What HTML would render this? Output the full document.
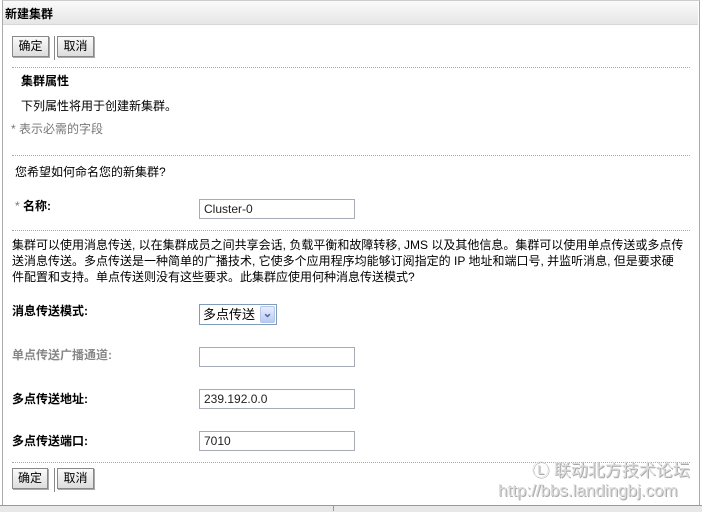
<!DOCTYPE html>
<html><head><meta charset="utf-8"><style>
body{margin:0;width:702px;height:511px;background:#fff;font-family:"Liberation Sans","Noto Sans CJK SC",sans-serif;font-size:12px;color:#000;position:relative;overflow:hidden}
.a{position:absolute;white-space:nowrap}
.frame{position:absolute;left:2px;top:0;width:696px;height:504px;border-left:1px solid #aaa;border-right:1px solid #aaa;border-top:1px solid #ccc}
.hdr{position:absolute;left:3px;top:1px;width:695px;height:23px;background:linear-gradient(#fafafa,#e6e6e6);border-bottom:1px solid #d8d8d8}
.btn{position:absolute;height:19px;border:1px solid #888;background:linear-gradient(#fafafa,#ddd);font-size:12px;line-height:19px;text-align:center;box-shadow:1px 1px 0 #aaa}
.dot{position:absolute;left:12px;width:678px;border-top:1px dotted #aaa}
.inp{position:absolute;left:199px;border:1px solid #a5acb5;font-size:12px;line-height:18px;padding-left:4px;box-sizing:border-box;width:156px;height:20px;color:#222}
b{font-weight:bold}
.g{color:#777}
</style></head><body>
<div class="frame"></div>
<div class="hdr"></div>
<div class="a" style="left:5px;top:5px;font-weight:bold">新建集群</div>
<div class="btn" style="left:12px;top:36px;width:35px">确定</div>
<div class="a" style="left:54px;top:36px;height:24px;border-left:1px solid #888"></div>
<div class="btn" style="left:57px;top:36px;width:35px">取消</div>
<div class="dot" style="top:67px"></div>
<div class="a" style="left:21px;top:72px;font-weight:bold">集群属性</div>
<div class="a" style="left:21px;top:97px">下列属性将用于创建新集群。</div>
<div class="a g" style="left:11px;top:120px">* 表示必需的字段</div>
<div class="dot" style="top:155px"></div>
<div class="a" style="left:15px;top:163px">您希望如何命名您的新集群?</div>
<div class="a" style="left:15px;top:197px"><span class="g">* </span><b>名称:</b></div>
<div class="inp" style="top:199px">Cluster-0</div>
<div class="dot" style="top:230px"></div>
<div class="a" style="left:12px;top:237px;line-height:16px">集群可以使用消息传送, 以在集群成员之间共享会话, 负载平衡和故障转移, JMS 以及其他信息。集群可以使用单点传送或多点传<br>送消息传送。多点传送是一种简单的广播技术, 它使多个应用程序均能够订阅指定的 IP 地址和端口号, 并监听消息, 但是要求硬<br>件配置和支持。单点传送则没有这些要求。此集群应使用何种消息传送模式?</div>
<div class="a" style="left:12px;top:302px;font-weight:bold">消息传送模式:</div>
<div class="a" style="left:199px;top:304px;border:1px solid #7f9db9;font-size:13px;line-height:19px;padding-left:3px;box-sizing:border-box;height:21px;width:78px">多点传送<span style="position:absolute;right:1px;top:1px;width:15px;height:17px;background:linear-gradient(#e6eefc,#b9cbf2);border:1px solid #b4c6ee;box-sizing:border-box;border-radius:2px;color:#4d6aa8;font-size:12px;line-height:13px;text-align:center;font-weight:bold">⌄</span></div>
<div class="a g" style="left:12px;top:346px;font-weight:bold;color:#888">单点传送广播通道:</div>
<div class="inp" style="top:347px"></div>
<div class="a" style="left:12px;top:390px;font-weight:bold">多点传送地址:</div>
<div class="inp" style="top:389px">239.192.0.0</div>
<div class="a" style="left:12px;top:432px;font-weight:bold">多点传送端口:</div>
<div class="inp" style="top:431px">7010</div>
<div class="dot" style="top:462px"></div>
<div class="btn" style="left:12px;top:468px;width:34px">确定</div>
<div class="a" style="left:54px;top:468px;height:24px;border-left:1px solid #888"></div>
<div class="btn" style="left:57px;top:468px;width:35px">取消</div>
<div class="a" style="left:532px;top:456px;font-size:17px;color:#dcdcdc;text-shadow:1px 1px 0 #aaa">Ⓛ 联动北方技术论坛</div>
<div class="a" style="left:498px;top:481px;font-size:17px;color:#dcdcdc;text-shadow:1px 1px 0 #aaa">http://bbs.landingbj.com</div>
<div class="a" style="left:0;top:505px;width:702px;height:6px;background:#e8e8e8;border-top:1px solid #999"></div>
<div class="a" style="left:333px;top:505px;height:6px;border-left:1px solid #999"></div>
</body></html>
